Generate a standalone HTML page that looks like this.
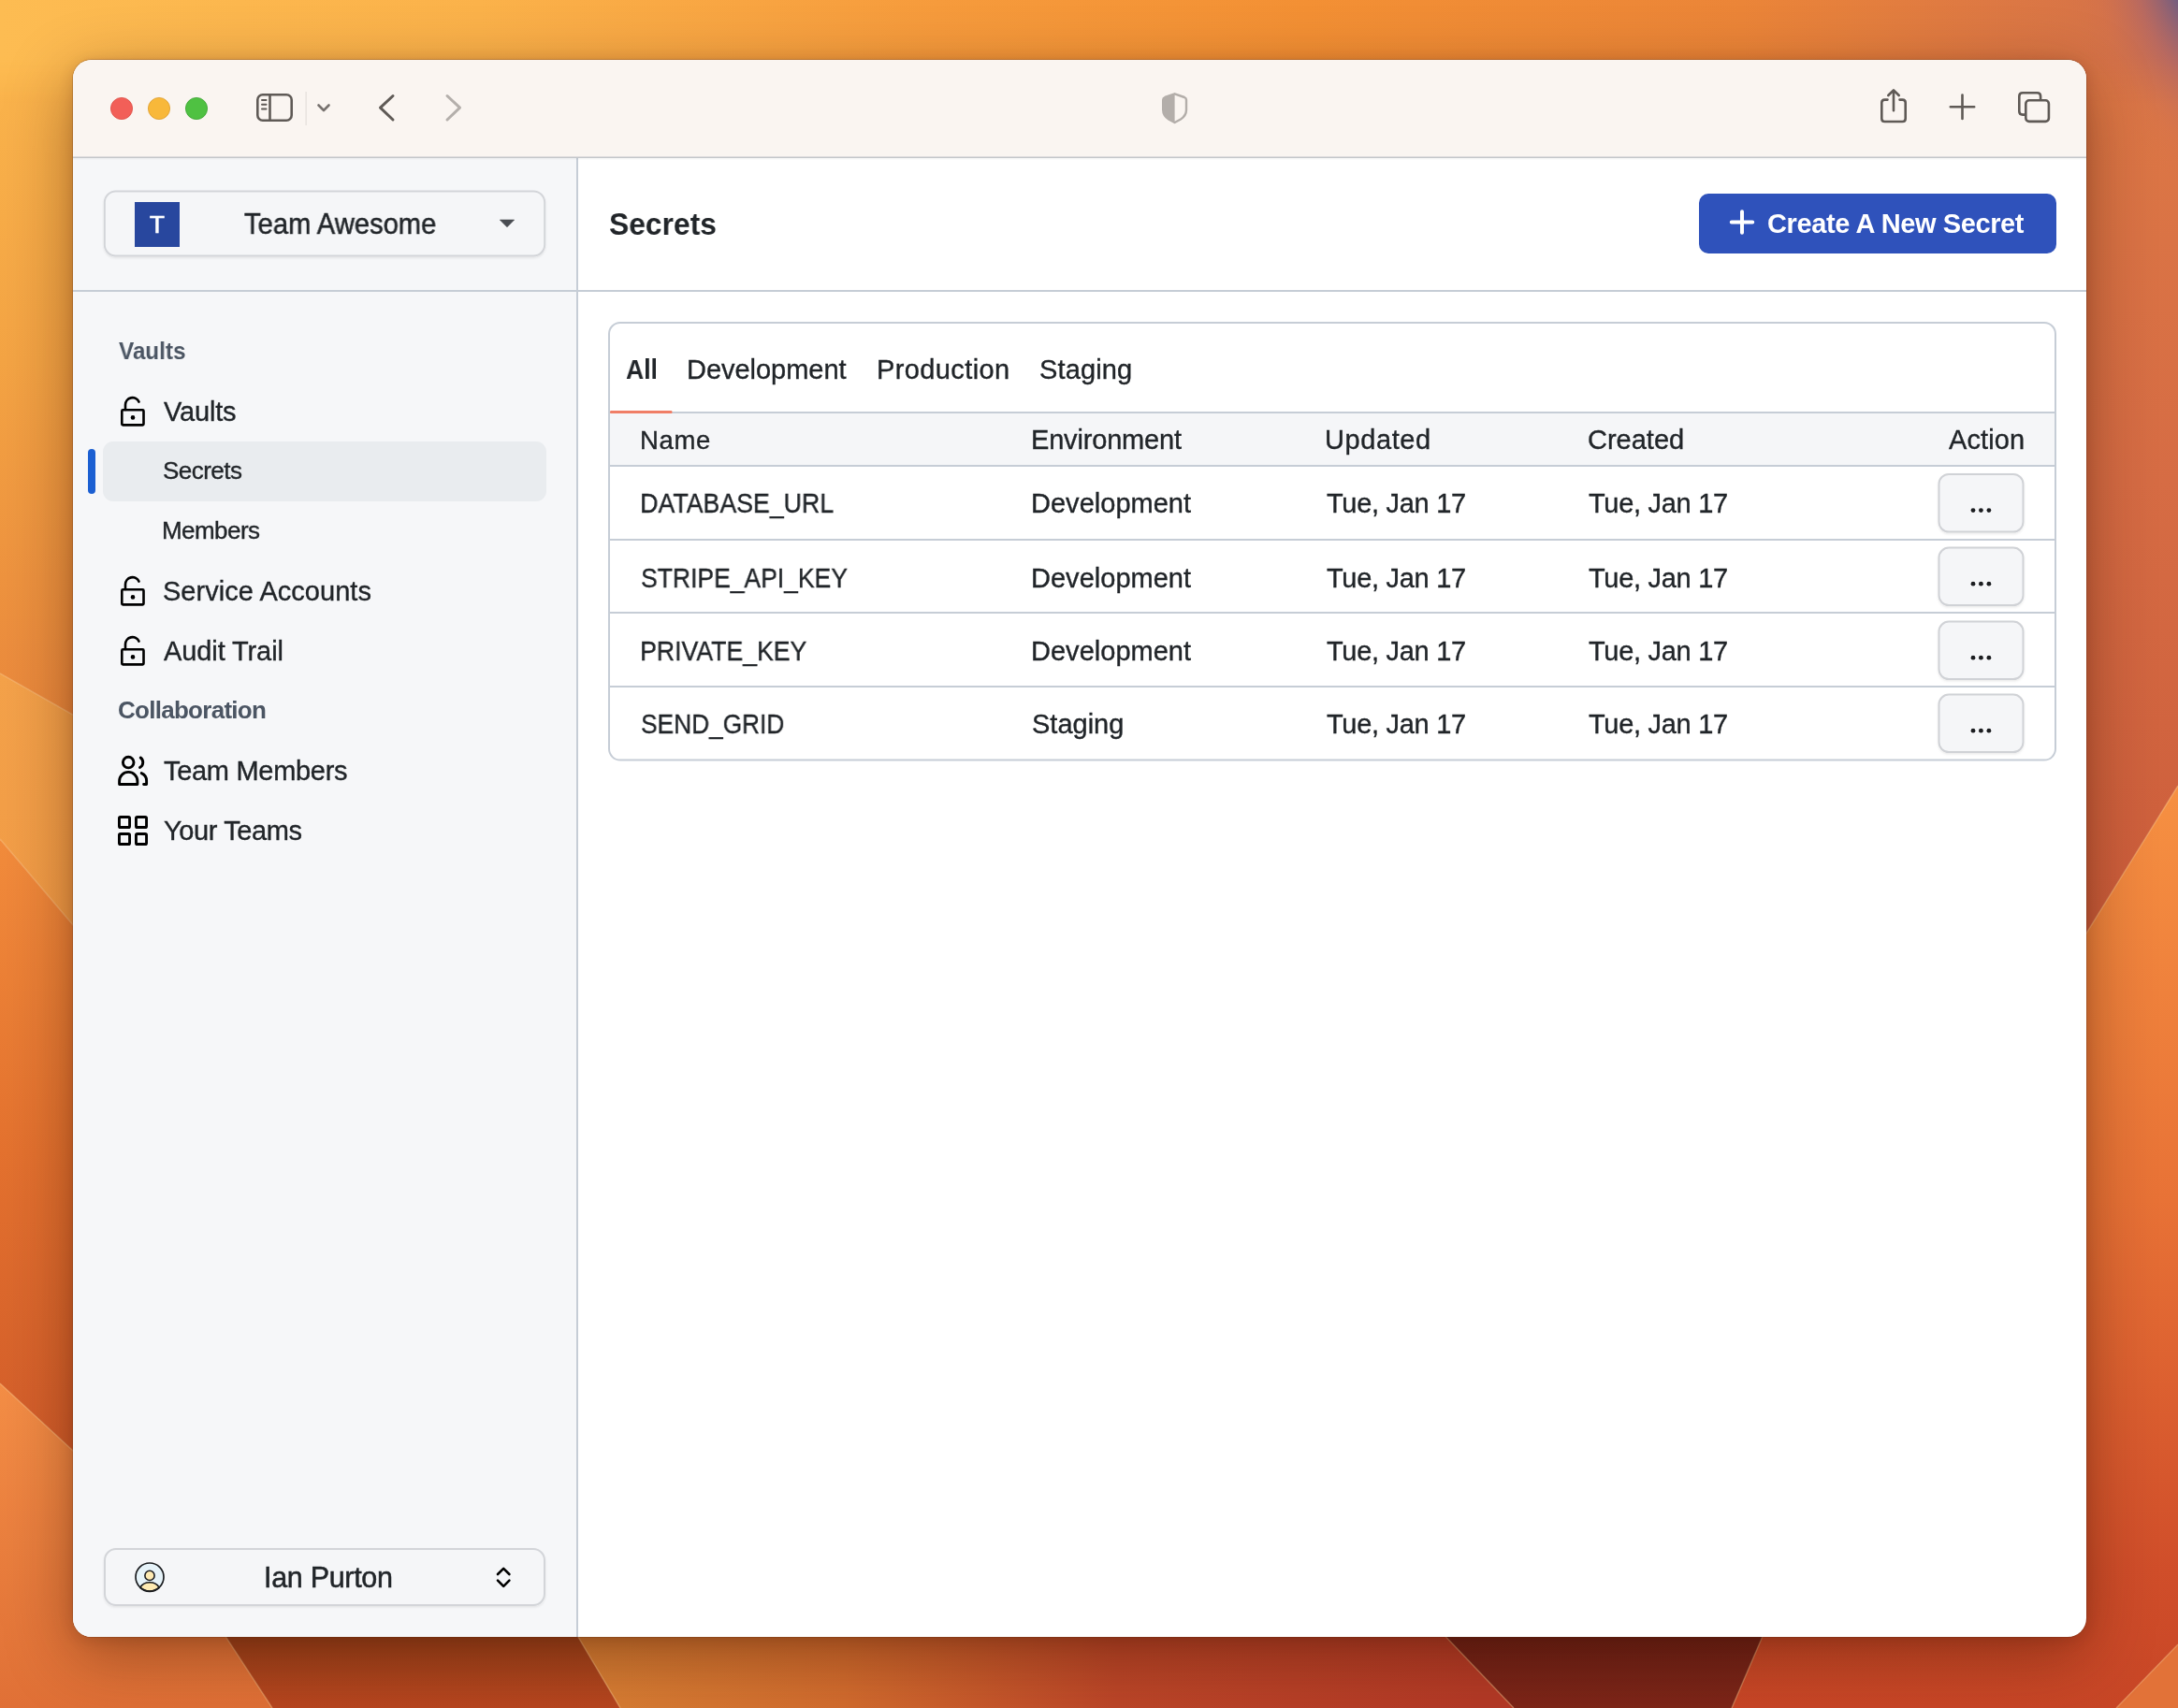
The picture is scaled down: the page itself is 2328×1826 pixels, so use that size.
<!DOCTYPE html>
<html><head><meta charset="utf-8"><title>Secrets</title>
<style>
html,body{margin:0;padding:0;width:2328px;height:1826px;overflow:hidden;background:#e07a3c;font-family:"Liberation Sans",sans-serif;}
#wall{position:absolute;left:0;top:0}
#win{position:absolute;left:78px;top:64px;width:2152px;height:1686px;border-radius:20px;overflow:hidden;background:#fff;
 box-shadow:0 0 0 1px rgba(90,40,10,0.22),0 20px 70px rgba(60,20,0,0.42),0 3px 16px rgba(60,20,0,0.16);}
.t{position:absolute;white-space:pre;will-change:transform;}
</style></head><body>
<svg id="wall" width="2328" height="1826" viewBox="0 0 2328 1826">
<defs>
 <linearGradient id="gTop" x1="0" y1="0" x2="1" y2="0">
  <stop offset="0" stop-color="#fdbc52"/><stop offset="0.22" stop-color="#fbb24a"/><stop offset="0.43" stop-color="#f69b3c"/>
  <stop offset="0.6" stop-color="#f39034"/><stop offset="0.8" stop-color="#eb8538"/><stop offset="0.9" stop-color="#df7a42"/><stop offset="1" stop-color="#d2704a"/>
 </linearGradient>
 <linearGradient id="mTop" x1="0" y1="0" x2="0" y2="1"><stop offset="0" stop-color="#fff"/><stop offset="0.55" stop-color="#fff"/><stop offset="1" stop-color="#000"/></linearGradient>
 <mask id="maskTop"><rect x="0" y="0" width="2328" height="110" fill="url(#mTop)"/></mask>
 <radialGradient id="gPurple" cx="0.5" cy="0.5" r="0.5">
  <stop offset="0" stop-color="#5a5a8c" stop-opacity="1"/><stop offset="0.22" stop-color="#6a5c84" stop-opacity="0.92"/><stop offset="0.5" stop-color="#a06274" stop-opacity="0.5"/><stop offset="0.8" stop-color="#c86c56" stop-opacity="0.15"/><stop offset="1" stop-color="#d07048" stop-opacity="0"/>
 </radialGradient>
 <linearGradient id="gL1" x1="0" y1="0" x2="0" y2="1"><stop offset="0" stop-color="#fcb84e"/><stop offset="0.5" stop-color="#f4a444"/><stop offset="1" stop-color="#ea883c"/></linearGradient>
 <linearGradient id="gL2" x1="0" y1="0" x2="0" y2="1"><stop offset="0" stop-color="#f4a24a"/><stop offset="1" stop-color="#f29c46"/></linearGradient>
 <linearGradient id="gL3" x1="0" y1="0" x2="0" y2="1"><stop offset="0" stop-color="#f28c3c"/><stop offset="0.5" stop-color="#e4722f"/><stop offset="1" stop-color="#d25c2a"/></linearGradient>
 <linearGradient id="gL4" x1="0" y1="0" x2="0" y2="1"><stop offset="0" stop-color="#f48e46"/><stop offset="1" stop-color="#e07036"/></linearGradient>
 <linearGradient id="gR1" x1="0" y1="0" x2="0" y2="1"><stop offset="0" stop-color="#de7a46"/><stop offset="0.5" stop-color="#d66c44"/><stop offset="1" stop-color="#cc5c3a"/></linearGradient>
 <linearGradient id="gR2" x1="0" y1="0" x2="0" y2="1"><stop offset="0" stop-color="#f69042"/><stop offset="0.45" stop-color="#e87236"/><stop offset="0.85" stop-color="#d04e2a"/><stop offset="1" stop-color="#c84626"/></linearGradient>
 <linearGradient id="gB1" x1="0" y1="0" x2="0" y2="1"><stop offset="0" stop-color="#de7636"/><stop offset="1" stop-color="#e07a38"/></linearGradient>
 <linearGradient id="gB2" x1="0" y1="0" x2="0" y2="1"><stop offset="0" stop-color="#9c421a"/><stop offset="1" stop-color="#b8461f"/></linearGradient>
 <linearGradient id="gB3" x1="612" y1="0" x2="1580" y2="0" gradientUnits="userSpaceOnUse"><stop offset="0" stop-color="#d88034"/><stop offset="0.3" stop-color="#d26c2e"/><stop offset="0.6" stop-color="#bc4628"/><stop offset="1" stop-color="#b43a26"/></linearGradient>
 <linearGradient id="gB5" x1="0" y1="0" x2="0" y2="1"><stop offset="0" stop-color="#6a1e16"/><stop offset="1" stop-color="#7e2618"/></linearGradient>
 <linearGradient id="gB6" x1="0" y1="0" x2="0" y2="1"><stop offset="0" stop-color="#c04426"/><stop offset="1" stop-color="#c64828"/></linearGradient>
</defs>
<rect x="0" y="0" width="2328" height="1826" fill="#e07a3c"/>
<polygon points="0,0 90,0 90,771 0,720" fill="url(#gL1)"/>
<polygon points="0,720 90,771 90,1003 0,897" fill="url(#gL2)"/>
<polygon points="0,897 90,1003 90,1562 0,1479" fill="url(#gL3)"/>
<polygon points="0,1479 90,1562 90,1740 235,1740 291,1826 0,1826" fill="url(#gL4)"/>
<polygon points="2210,0 2328,0 2328,840 2210,1030" fill="url(#gR1)"/>
<polygon points="2210,1030 2328,840 2328,1826 1851,1826 1888,1740 2210,1740" fill="url(#gR2)"/>
<rect x="0" y="0" width="2328" height="110" fill="url(#gTop)" mask="url(#maskTop)"/>
<polygon points="235,1740 612,1740 663,1826 291,1826" fill="url(#gB2)"/>
<polygon points="612,1740 1536,1740 1618,1826 663,1826" fill="url(#gB3)"/>
<polygon points="1536,1740 1888,1740 1851,1826 1618,1826" fill="url(#gB5)"/>
<polygon points="2328,1758 2328,1826 2262,1826" fill="#e27238"/>
<g stroke="#ffd9a0" stroke-opacity="0.35" stroke-width="1.5" fill="none">
 <path d="M0 720 L90 771"/><path d="M0 897 L90 1003"/><path d="M0 1479 L90 1562"/>
 <path d="M2210 1030 L2328 840"/>
 <path d="M235 1740 L291 1826"/><path d="M612 1740 L663 1826"/><path d="M1536 1740 L1618 1826"/><path d="M1888 1740 L1851 1826"/><path d="M2328 1758 L2262 1826"/>
</g>
<ellipse cx="2350" cy="-30" rx="140" ry="250" transform="rotate(-12 2350 -30)" fill="url(#gPurple)"/>
</svg>
<div id="win">
<svg width="2152" height="1686" viewBox="78 64 2152 1686" style="position:absolute;left:0;top:0">
<defs>
 <filter id="sh" x="-5%" y="-20%" width="110%" height="150%"><feDropShadow dx="0" dy="1.5" stdDeviation="1.2" flood-color="#000" flood-opacity="0.08"/></filter>
</defs>
<rect x="78" y="64" width="2152" height="104" fill="#faf5f1"/>
<rect x="78" y="167.5" width="2152" height="1.5" fill="#c4c6ca"/>
<rect x="78" y="169" width="538" height="1581" fill="#f6f7f9"/>
<rect x="616" y="169" width="2" height="1581" fill="#c6cdd6"/>
<rect x="78" y="169" width="2152" height="1.5" fill="#000" opacity="0.03"/>
<rect x="78" y="310" width="538" height="2" fill="#c6cdd6"/>
<rect x="618" y="310" width="1612" height="2" fill="#c6cdd6"/>
<!-- traffic -->
<circle cx="130" cy="116" r="11.6" fill="#f25f58" stroke="#dc4c44" stroke-width="0.8"/>
<circle cx="170" cy="116" r="11.6" fill="#f8b83a" stroke="#dc9c2c" stroke-width="0.8"/>
<circle cx="210" cy="116" r="11.6" fill="#4fc142" stroke="#3aa231" stroke-width="0.8"/>
<!-- sidebar toggle -->
<g fill="none" stroke="#5f5a56" stroke-width="2.6" stroke-linecap="round" stroke-linejoin="round">
 <rect x="275.3" y="101.3" width="36.4" height="27.4" rx="5.5"/>
 <path d="M288.5 101.5 V128.5"/>
 <path d="M280 107 H284.5 M280 111.8 H284.5 M280 116.5 H284.5" stroke-width="2"/>
</g>
<rect x="326.5" y="98" width="1.2" height="36" fill="#e3dfdb"/>
<path d="M340.5 112.5 L346 118 L351.5 112.5" fill="none" stroke="#77726f" stroke-width="2.6" stroke-linecap="round" stroke-linejoin="round"/>
<path d="M420 102.5 L406.5 115.2 L420 128" fill="none" stroke="#5f5a56" stroke-width="3" stroke-linecap="round" stroke-linejoin="round"/>
<path d="M478 102.5 L491.5 115.2 L478 128" fill="none" stroke="#b4afab" stroke-width="3" stroke-linecap="round" stroke-linejoin="round"/>
<!-- shield -->
<g fill="none" stroke="#b3aeaa" stroke-width="2.4" stroke-linejoin="round">
 <path d="M1255.6 100.3 L1266 104 Q1268 104.8 1268 106.8 V117.5 Q1268 123.5 1262 127.5 L1255.6 131 L1249.2 127.5 Q1243.2 123.5 1243.2 117.5 V106.8 Q1243.2 104.8 1245.2 104 Z"/>
</g>
<path d="M1255.6 100 L1245.2 104 Q1243 104.8 1243 106.8 V117.5 Q1243 123.7 1249 127.7 L1255.6 131.3 Z" fill="#b3aeaa"/>
<!-- share / plus / tabs -->
<g fill="none" stroke="#5f5a56" stroke-width="2.6" stroke-linecap="round" stroke-linejoin="round">
 <path d="M2017.5 106.6 H2014.5 Q2011.3 106.6 2011.3 109.8 V126.8 Q2011.3 130 2014.5 130 H2033.5 Q2036.7 130 2036.7 126.8 V109.8 Q2036.7 106.6 2033.5 106.6 H2030.5"/>
 <path d="M2024 118.2 V96.5 M2018.3 102 L2024 96.3 L2029.7 102"/>
 <path d="M2084.8 114.3 H2110.2 M2097.5 101.6 V127"/>
 <rect x="2165.3" y="107.3" width="24.6" height="22.6" rx="3.6"/>
 <path d="M2164.8 122.6 H2162 Q2158.3 122.6 2158.3 119 V102.9 Q2158.3 99.3 2162 99.3 H2177.4 Q2181.1 99.3 2181.1 102.9 V106.8"/>
</g>
<!-- team switcher -->
<g filter="url(#sh)"><rect x="111.8" y="204.5" width="470.4" height="69" rx="12" fill="#f5f6f8" stroke="#d3d5d9" stroke-width="2"/></g>
<rect x="144" y="216" width="48" height="48" fill="#28479e"/>
<path d="M534.3 235 H549.7 L542 242.8 Z" fill="#4a4d53" stroke="#4a4d53" stroke-width="0.6" stroke-linejoin="round"/>
<!-- secrets highlight -->
<rect x="110" y="472" width="474" height="64" rx="11" fill="#e9ecef"/>
<rect x="94" y="480" width="8" height="48" rx="4" fill="#1b5fd2"/>
<g transform="translate(0,0)" fill="none" stroke="#000" stroke-width="2.6" stroke-linecap="round" stroke-linejoin="round">
<rect x="130.3" y="438.3" width="23.2" height="16.1" rx="1.1"/>
<path d="M134 438 V432.8 A7.6 7.6 0 0 1 148.5 429.6"/>
<circle cx="142" cy="446.4" r="2.3" fill="#000" stroke="none"/></g>
<g transform="translate(0,192)" fill="none" stroke="#000" stroke-width="2.6" stroke-linecap="round" stroke-linejoin="round">
<rect x="130.3" y="438.3" width="23.2" height="16.1" rx="1.1"/>
<path d="M134 438 V432.8 A7.6 7.6 0 0 1 148.5 429.6"/>
<circle cx="142" cy="446.4" r="2.3" fill="#000" stroke="none"/></g>
<g transform="translate(0,256)" fill="none" stroke="#000" stroke-width="2.6" stroke-linecap="round" stroke-linejoin="round">
<rect x="130.3" y="438.3" width="23.2" height="16.1" rx="1.1"/>
<path d="M134 438 V432.8 A7.6 7.6 0 0 1 148.5 429.6"/>
<circle cx="142" cy="446.4" r="2.3" fill="#000" stroke="none"/></g>
<!-- team members icon -->
<g fill="none" stroke="#000" stroke-width="2.9" stroke-linecap="round" stroke-linejoin="round">
 <circle cx="137.2" cy="815.1" r="5.8"/>
 <path d="M127.6 838.5 V835 A9.65 9.65 0 0 1 146.9 835 V838.5 Z"/>
 <path d="M150.2 810 A6.3 6.3 0 0 1 149.5 820.6"/>
 <path d="M151.2 826.6 A8.8 8.8 0 0 1 156.6 834.8 V838.5 H153.6"/>
</g>
<!-- your teams icon -->
<g fill="none" stroke="#000" stroke-width="2.9" stroke-linejoin="round">
 <rect x="127.45" y="873.45" width="11.1" height="11.1" rx="1.4"/>
 <rect x="145.45" y="873.45" width="11.1" height="11.1" rx="1.4"/>
 <rect x="127.45" y="891.45" width="11.1" height="11.1" rx="1.4"/>
 <rect x="145.45" y="891.45" width="11.1" height="11.1" rx="1.4"/>
</g>
<!-- user button -->
<g filter="url(#sh)"><rect x="112" y="1656" width="470" height="60" rx="12" fill="#f5f6f8" stroke="#d3d5d9" stroke-width="2"/></g>
<g>
 <circle cx="160" cy="1686" r="15" fill="#e6f3f9"/>
 <path d="M149.8 1697.4 A11.2 9.5 0 0 1 170.2 1697.4 A15 15 0 0 1 149.8 1697.4 Z" fill="#fdeab2" stroke="#1b1d20" stroke-width="1.6" stroke-linejoin="round"/>
 <circle cx="160" cy="1684.4" r="5.1" fill="#fdeab2" stroke="#1b1d20" stroke-width="1.6"/>
 <circle cx="160" cy="1686" r="15" fill="none" stroke="#1b1d20" stroke-width="1.7"/>
</g>
<path d="M532 1683 L538.2 1676.8 L544.4 1683 M532 1689.6 L538.2 1695.8 L544.4 1689.6" fill="none" stroke="#000" stroke-width="2.6" stroke-linecap="round" stroke-linejoin="round"/>
<!-- create button -->
<rect x="1816" y="207" width="382" height="64" rx="10" fill="#2f52bb"/>
<path d="M1850.8 237.5 H1873.2 M1862 226.2 V248.8" fill="none" stroke="#fff" stroke-width="4" stroke-linecap="round"/>
<!-- card -->
<rect x="651" y="345" width="1546" height="467.6" rx="12" fill="#fff" stroke="#c6cdd6" stroke-width="2"/>
<rect x="652" y="442" width="1544" height="55" fill="#f5f6f8"/>
<rect x="652" y="440" width="1544" height="2" fill="#c6cdd6"/>
<rect x="652" y="439" width="66.5" height="3" rx="1.2" fill="#f07e66"/>
<rect x="652" y="497" width="1544" height="2" fill="#c6cdd6"/>
<rect x="652" y="576" width="1544" height="2" fill="#c6cdd6"/>
<rect x="652" y="654" width="1544" height="2" fill="#c6cdd6"/>
<rect x="652" y="733" width="1544" height="2" fill="#c6cdd6"/>
<g filter="url(#sh)"><rect x="2072.5" y="507" width="90" height="61.5" rx="10.5" fill="#f5f6f8" stroke="#d0d2d6" stroke-width="2"/></g>
<circle cx="2109" cy="545.6" r="2.4" fill="#1b1d20"/>
<circle cx="2117.4" cy="545.6" r="2.4" fill="#1b1d20"/>
<circle cx="2125.9" cy="545.6" r="2.4" fill="#1b1d20"/>
<g filter="url(#sh)"><rect x="2072.5" y="585.6" width="90" height="61.5" rx="10.5" fill="#f5f6f8" stroke="#d0d2d6" stroke-width="2"/></g>
<circle cx="2109" cy="624.2" r="2.4" fill="#1b1d20"/>
<circle cx="2117.4" cy="624.2" r="2.4" fill="#1b1d20"/>
<circle cx="2125.9" cy="624.2" r="2.4" fill="#1b1d20"/>
<g filter="url(#sh)"><rect x="2072.5" y="664.6" width="90" height="61.5" rx="10.5" fill="#f5f6f8" stroke="#d0d2d6" stroke-width="2"/></g>
<circle cx="2109" cy="703.2" r="2.4" fill="#1b1d20"/>
<circle cx="2117.4" cy="703.2" r="2.4" fill="#1b1d20"/>
<circle cx="2125.9" cy="703.2" r="2.4" fill="#1b1d20"/>
<g filter="url(#sh)"><rect x="2072.5" y="742.6" width="90" height="61.5" rx="10.5" fill="#f5f6f8" stroke="#d0d2d6" stroke-width="2"/></g>
<circle cx="2109" cy="781.2" r="2.4" fill="#1b1d20"/>
<circle cx="2117.4" cy="781.2" r="2.4" fill="#1b1d20"/>
<circle cx="2125.9" cy="781.2" r="2.4" fill="#1b1d20"/>
</svg>
</div>
<div class="t" style="left:261.00px;top:224.00px;font-size:30.5px;line-height:30.5px;font-weight:400;color:#212529;letter-spacing:0.000px;-webkit-text-stroke:0.5px #212529;transform:scaleX(0.9561);transform-origin:0.00px 0">Team Awesome</div>
<div class="t" style="left:160.00px;top:227.00px;font-size:26.0px;line-height:26.0px;font-weight:400;color:#ffffff;letter-spacing:0.000px;-webkit-text-stroke:0.7px #ffffff">T</div>
<div class="t" style="left:127.00px;top:362.00px;font-size:26.0px;line-height:26.0px;font-weight:700;color:#4b5563;letter-spacing:0.000px;transform:scaleX(0.9326);transform-origin:0.00px 0">Vaults</div>
<div class="t" style="left:175.00px;top:426.00px;font-size:29.0px;line-height:29.0px;font-weight:400;color:#212529;letter-spacing:-0.189px;-webkit-text-stroke:0.35px #212529">Vaults</div>
<div class="t" style="left:174.00px;top:490.00px;font-size:26.0px;line-height:26.0px;font-weight:400;color:#212529;letter-spacing:-0.524px;-webkit-text-stroke:0.35px #212529">Secrets</div>
<div class="t" style="left:173.00px;top:554.00px;font-size:26.0px;line-height:26.0px;font-weight:400;color:#212529;letter-spacing:-0.559px;-webkit-text-stroke:0.35px #212529">Members</div>
<div class="t" style="left:174.00px;top:618.00px;font-size:29.0px;line-height:29.0px;font-weight:400;color:#212529;letter-spacing:0.031px;-webkit-text-stroke:0.35px #212529">Service Accounts</div>
<div class="t" style="left:175.00px;top:682.00px;font-size:29.0px;line-height:29.0px;font-weight:400;color:#212529;letter-spacing:-0.102px;-webkit-text-stroke:0.35px #212529">Audit Trail</div>
<div class="t" style="left:126.00px;top:746.00px;font-size:26.0px;line-height:26.0px;font-weight:700;color:#4b5563;letter-spacing:-0.723px;">Collaboration</div>
<div class="t" style="left:175.00px;top:810.00px;font-size:29.0px;line-height:29.0px;font-weight:400;color:#212529;letter-spacing:-0.303px;-webkit-text-stroke:0.35px #212529">Team Members</div>
<div class="t" style="left:175.00px;top:874.00px;font-size:29.0px;line-height:29.0px;font-weight:400;color:#212529;letter-spacing:-0.396px;-webkit-text-stroke:0.35px #212529">Your Teams</div>
<div class="t" style="left:282.00px;top:1671.00px;font-size:30.5px;line-height:30.5px;font-weight:400;color:#212529;letter-spacing:-0.308px;-webkit-text-stroke:0.5px #212529">Ian Purton</div>
<div class="t" style="left:651.00px;top:222.00px;font-size:34.0px;line-height:34.0px;font-weight:700;color:#212529;letter-spacing:0.000px;transform:scaleX(0.9347);transform-origin:0.00px 0">Secrets</div>
<div class="t" style="left:1889.00px;top:225.00px;font-size:29.0px;line-height:29.0px;font-weight:700;color:#ffffff;letter-spacing:-0.390px;">Create A New Secret</div>
<div class="t" style="left:669.00px;top:381.00px;font-size:29.0px;line-height:29.0px;font-weight:700;color:#212529;letter-spacing:0.000px;transform:scaleX(0.9143);transform-origin:0.00px 0">All</div>
<div class="t" style="left:734.00px;top:381.00px;font-size:29.0px;line-height:29.0px;font-weight:400;color:#212529;letter-spacing:-0.031px;-webkit-text-stroke:0.35px #212529">Development</div>
<div class="t" style="left:937.00px;top:381.00px;font-size:29.0px;line-height:29.0px;font-weight:400;color:#212529;letter-spacing:0.387px;-webkit-text-stroke:0.35px #212529">Production</div>
<div class="t" style="left:1111.00px;top:381.00px;font-size:29.0px;line-height:29.0px;font-weight:400;color:#212529;letter-spacing:0.129px;-webkit-text-stroke:0.35px #212529">Staging</div>
<div class="t" style="left:683.50px;top:457.00px;font-size:27.5px;line-height:27.5px;font-weight:400;color:#212529;letter-spacing:0.646px;-webkit-text-stroke:0.35px #212529">Name</div>
<div class="t" style="left:1102.00px;top:456.00px;font-size:29.0px;line-height:29.0px;font-weight:400;color:#212529;letter-spacing:-0.174px;-webkit-text-stroke:0.35px #212529">Environment</div>
<div class="t" style="left:1416.00px;top:456.00px;font-size:29.0px;line-height:29.0px;font-weight:400;color:#212529;letter-spacing:0.581px;-webkit-text-stroke:0.35px #212529">Updated</div>
<div class="t" style="left:1697.00px;top:456.00px;font-size:29.0px;line-height:29.0px;font-weight:400;color:#212529;letter-spacing:-0.007px;-webkit-text-stroke:0.35px #212529">Created</div>
<div class="t" style="left:2083.00px;top:456.00px;font-size:29.0px;line-height:29.0px;font-weight:400;color:#212529;letter-spacing:0.106px;-webkit-text-stroke:0.35px #212529">Action</div>
<div class="t" style="left:683.50px;top:524.00px;font-size:29.0px;line-height:29.0px;font-weight:400;color:#212529;letter-spacing:0.000px;transform:scaleX(0.9217);transform-origin:2.00px 0;-webkit-text-stroke:0.35px #212529">DATABASE_URL</div>
<div class="t" style="left:1102.00px;top:524.00px;font-size:29.0px;line-height:29.0px;font-weight:400;color:#212529;letter-spacing:0.019px;-webkit-text-stroke:0.35px #212529">Development</div>
<div class="t" style="left:1418.00px;top:524.00px;font-size:29.0px;line-height:29.0px;font-weight:400;color:#212529;letter-spacing:-0.295px;-webkit-text-stroke:0.35px #212529">Tue, Jan 17</div>
<div class="t" style="left:1698.00px;top:524.00px;font-size:29.0px;line-height:29.0px;font-weight:400;color:#212529;letter-spacing:-0.295px;-webkit-text-stroke:0.35px #212529">Tue, Jan 17</div>
<div class="t" style="left:684.50px;top:603.60px;font-size:29.0px;line-height:29.0px;font-weight:400;color:#212529;letter-spacing:0.000px;transform:scaleX(0.9134);transform-origin:1.00px 0;-webkit-text-stroke:0.35px #212529">STRIPE_API_KEY</div>
<div class="t" style="left:1102.00px;top:603.60px;font-size:29.0px;line-height:29.0px;font-weight:400;color:#212529;letter-spacing:0.019px;-webkit-text-stroke:0.35px #212529">Development</div>
<div class="t" style="left:1418.00px;top:603.60px;font-size:29.0px;line-height:29.0px;font-weight:400;color:#212529;letter-spacing:-0.295px;-webkit-text-stroke:0.35px #212529">Tue, Jan 17</div>
<div class="t" style="left:1698.00px;top:603.60px;font-size:29.0px;line-height:29.0px;font-weight:400;color:#212529;letter-spacing:-0.295px;-webkit-text-stroke:0.35px #212529">Tue, Jan 17</div>
<div class="t" style="left:683.50px;top:681.70px;font-size:29.0px;line-height:29.0px;font-weight:400;color:#212529;letter-spacing:0.000px;transform:scaleX(0.9186);transform-origin:2.00px 0;-webkit-text-stroke:0.35px #212529">PRIVATE_KEY</div>
<div class="t" style="left:1102.00px;top:681.70px;font-size:29.0px;line-height:29.0px;font-weight:400;color:#212529;letter-spacing:0.019px;-webkit-text-stroke:0.35px #212529">Development</div>
<div class="t" style="left:1418.00px;top:681.70px;font-size:29.0px;line-height:29.0px;font-weight:400;color:#212529;letter-spacing:-0.295px;-webkit-text-stroke:0.35px #212529">Tue, Jan 17</div>
<div class="t" style="left:1698.00px;top:681.70px;font-size:29.0px;line-height:29.0px;font-weight:400;color:#212529;letter-spacing:-0.295px;-webkit-text-stroke:0.35px #212529">Tue, Jan 17</div>
<div class="t" style="left:684.50px;top:760.00px;font-size:29.0px;line-height:29.0px;font-weight:400;color:#212529;letter-spacing:0.000px;transform:scaleX(0.9052);transform-origin:1.00px 0;-webkit-text-stroke:0.35px #212529">SEND_GRID</div>
<div class="t" style="left:1103.00px;top:760.00px;font-size:29.0px;line-height:29.0px;font-weight:400;color:#212529;letter-spacing:0.000px;-webkit-text-stroke:0.35px #212529">Staging</div>
<div class="t" style="left:1418.00px;top:760.00px;font-size:29.0px;line-height:29.0px;font-weight:400;color:#212529;letter-spacing:-0.295px;-webkit-text-stroke:0.35px #212529">Tue, Jan 17</div>
<div class="t" style="left:1698.00px;top:760.00px;font-size:29.0px;line-height:29.0px;font-weight:400;color:#212529;letter-spacing:-0.295px;-webkit-text-stroke:0.35px #212529">Tue, Jan 17</div>
</body></html>
